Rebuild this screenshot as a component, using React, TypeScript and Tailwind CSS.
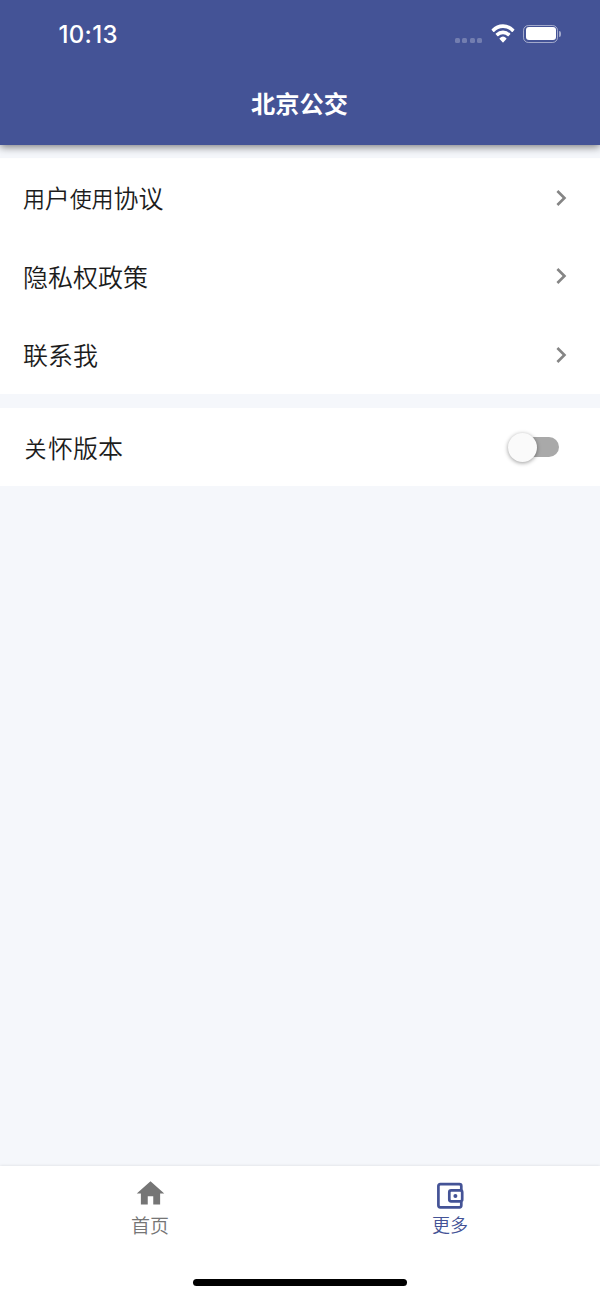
import type { ReactNode } from 'react';
import { MdChevronRight, MdHome } from 'react-icons/md';

interface RowProps {
  children: ReactNode;
  action?: ReactNode;
}

const Small = ({ children }: { children: ReactNode }) => (
  <span className="relative -top-px inline-block w-[21.8px] text-[22px]">{children}</span>
);

const Row = ({ children, action }: RowProps) => (
  <div className="flex h-[78.5px] items-center justify-between pr-[23.5px] pl-[23px]">
    <span className="pt-px text-[25px] leading-none font-[350] text-[#1c1c1c]">{children}</span>
    {action ?? <MdChevronRight className="mt-px h-8 w-8 text-[#858585]" />}
  </div>
);

const WalletIcon = () => (
  <svg className="h-[28px] w-[28px]" viewBox="0 0 28 28" fill="none" stroke="currentColor" strokeWidth="2.7">
    <path d="M25.3 8V4Q25.3 2.2 23.5 2.2H4.3Q2.400 2.200 2.400 4V23.200Q2.400 25.300 4.300 25.300H23.500Q25.300 25.300 25.300 23.200V20" />
    <rect x="13.3" y="8.4" width="12.900" height="11" rx="1.8" />
    <circle cx="19.4" cy="14" r="2" fill="currentColor" stroke="none" />
  </svg>
);

const StatusBar = () => (
  <div className="flex h-[66px] items-start justify-between pt-[21px] pr-[39px] pl-[58.5px] text-white">
    <span className="font-['Inter'] text-[24px] leading-7 font-medium tracking-[0.3px]">10:13</span>
    <div className="flex items-center pt-[3px]">
      <div className="mt-[14px] flex gap-[2.5px]">
        {[0, 1, 2, 3].map((dot) => (
          <span key={dot} className="h-[5px] w-[5px] rounded-[1.5px] bg-white/25" />
        ))}
      </div>
      <svg className="ml-[8.5px] h-[19px] w-6" viewBox="0 0 17 12.3" preserveAspectRatio="none" fill="currentColor">
        <path d="M8.5 2.6c2.3 0 4.6.9 6.3 2.5.1.1.3.1.5 0l1.2-1.2c.1-.1.1-.4 0-.5a11.5 11.5 0 0 0-16 0c-.1.1-.1.4 0 .5l1.2 1.2c.1.1.4.1.5 0a9.1 9.1 0 0 1 6.3-2.5z" />
        <path d="M8.5 6.6c1.3 0 2.5.5 3.4 1.3.2.1.4.1.5 0l1.2-1.2c.2-.2.2-.4 0-.5a7.5 7.5 0 0 0-10.2 0c-.2.1-.2.3 0 .5l1.2 1.2c.1.1.3.1.5 0 .9-.8 2.1-1.3 3.4-1.3z" />
        <path d="M10.9 9.2c.1.1.1.4 0 .5l-2.1 2.1c-.2.2-.4.2-.6 0L6.1 9.7c-.1-.1-.1-.4 0-.5a3.6 3.6 0 0 1 4.8 0z" />
      </svg>
      <div className="ml-[8.5px] h-[18px] w-[35px] rounded-[5.5px] border border-white/50 p-[1.5px]">
        <div className="h-full w-full rounded-[3px] bg-white" />
      </div>
      <span className="ml-px h-[6px] w-[2px] rounded-r-full bg-white/50" />
    </div>
  </div>
);

const Toggle = () => (
  <div className="relative mt-px mr-[17.5px] h-[29px] w-[51px]">
    <div className="absolute top-[4.5px] right-0 h-5 w-[46px] rounded-full bg-[#a9a9a9]" />
    <div className="absolute top-0 left-0 h-[29px] w-[29px] rounded-full bg-[#fafafa] shadow-[0_1px_4px_rgba(0,0,0,0.4)]" />
  </div>
);

const App = () => (
  <div className="flex h-[1298px] w-[600px] flex-col overflow-hidden bg-[#f5f7fb] font-['Noto_Sans_CJK_SC',sans-serif]">
    <header className="z-10 h-[144.5px] shrink-0 bg-[#445396] shadow-[0_2px_8px_rgba(0,0,0,0.5)]">
      <StatusBar />
      <h1 className="pt-[19px] pr-px text-center text-[24.2px] leading-9 font-bold text-white">北京公交</h1>
    </header>

    <main className="flex-1 pt-[13.5px]">
      <section className="bg-white">
        <Row>
          <Small>用</Small>户<Small>使</Small>
          <Small>用</Small>协议
        </Row>
        <Row>隐私权政策</Row>
        <Row>联系我</Row>
      </section>
      <section className="mt-[14px] bg-white">
        <Row action={<Toggle />}>
          <span className="relative -top-px inline-block w-[25px] pl-[1.5px] text-[22px]">关</span>怀版本
        </Row>
      </section>
    </main>

    <nav className="relative grid h-[132.5px] shrink-0 grid-cols-2 bg-white pt-[10.5px] shadow-[0_0_3px_rgba(0,0,0,0.12)]">
      <div className="flex flex-col items-center pt-px text-[#757575]">
        <MdHome className="h-[33px] w-[33px]" />
        <span className="mt-px text-[19px] leading-7 font-[350]">首页</span>
      </div>
      <div className="flex flex-col items-center pt-[5.5px] text-[#445396]">
        <WalletIcon />
        <span className="text-[18px] leading-7 font-[350]">更多</span>
      </div>
      <div className="absolute bottom-3 left-[193px] h-[7px] w-[214px] rounded-full bg-black" />
    </nav>
  </div>
);

export default App;
